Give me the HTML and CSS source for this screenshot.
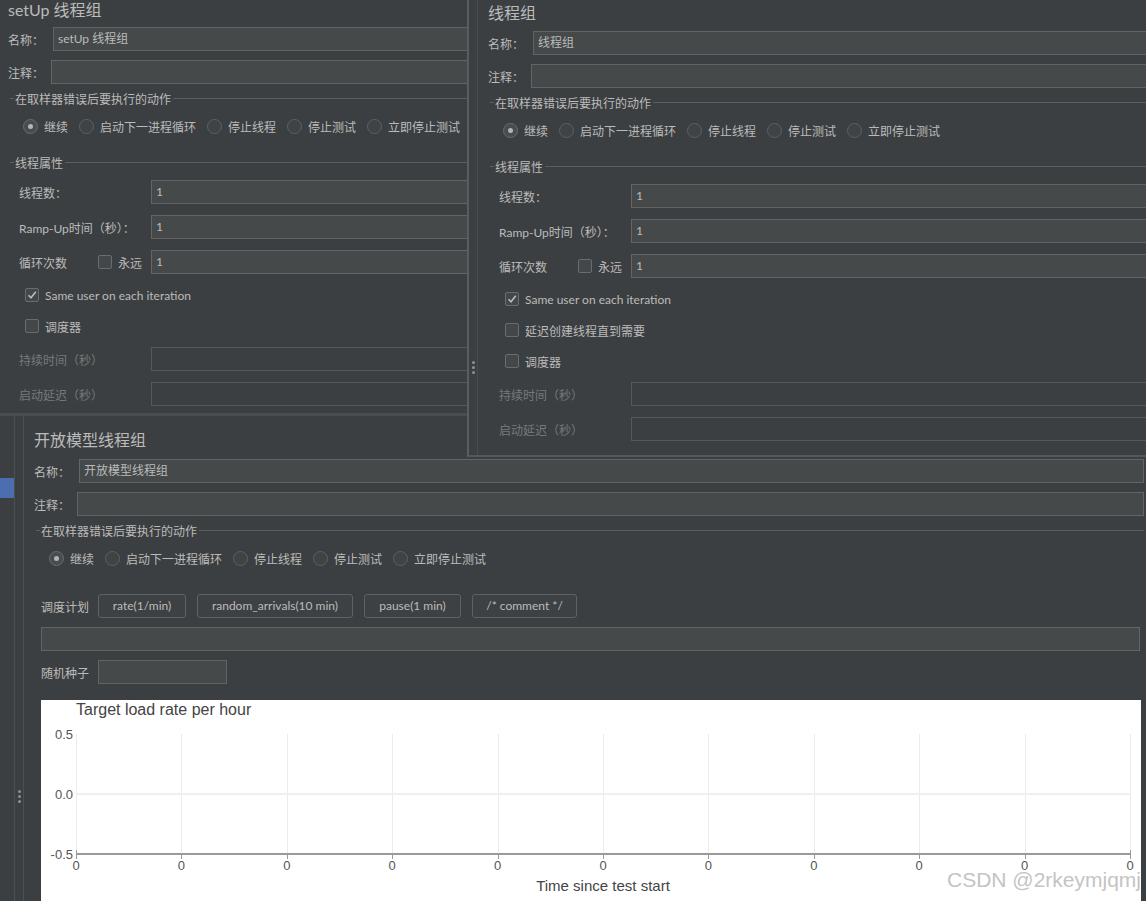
FILE: index.html
```html
<!DOCTYPE html>
<html lang="zh-CN">
<head>
<meta charset="utf-8">
<title>JMeter 线程组</title>
<link rel="stylesheet" href="styles.css">
</head>
<body>
<div class="desk">

  <!-- 开放模型线程组 -->
  <section class="win win-c">
    <div class="side"><div class="sel"></div></div>
    <div class="split split-c"><i></i><i></i><i></i></div>
    <div class="pane pane-c">
      <h1 class="title">开放模型线程组</h1>
      <div class="frow"><span class="fl fl-name">名称：</span><div class="inp">开放模型线程组</div></div>
      <div class="frow frow-gap"><span class="fl fl-cmt">注释：</span><div class="inp"></div></div>
      <div class="legend"><span>在取样器错误后要执行的动作</span></div>
      <div class="radios">
        <span class="ritem"><span class="radio on"></span>继续</span>
        <span class="ritem"><span class="radio"></span>启动下一进程循环</span>
        <span class="ritem"><span class="radio"></span>停止线程</span>
        <span class="ritem"><span class="radio"></span>停止测试</span>
        <span class="ritem"><span class="radio"></span>立即停止测试</span>
      </div>
      <div class="sched">
        <span class="slabel">调度计划</span>
        <span class="btn btn-rate">rate(1/min)</span>
        <span class="btn btn-rand">random_arrivals(10 min)</span>
        <span class="btn btn-pause">pause(1 min)</span>
        <span class="btn btn-cmt">/* comment */</span>
      </div>
      <div class="inp area"></div>
      <div class="seed"><span class="slabel">随机种子</span><div class="inp seed-inp"></div></div>
      <div class="chart">
        <svg width="1100" height="205" viewBox="0 0 1100 205">
          <g stroke="#ececec" stroke-width="1">
            <line x1="35.5" y1="34" x2="35.5" y2="154"/>
            <line x1="140.5" y1="34" x2="140.5" y2="154"/>
            <line x1="246.5" y1="34" x2="246.5" y2="154"/>
            <line x1="351.5" y1="34" x2="351.5" y2="154"/>
            <line x1="457.5" y1="34" x2="457.5" y2="154"/>
            <line x1="562.5" y1="34" x2="562.5" y2="154"/>
            <line x1="667.5" y1="34" x2="667.5" y2="154"/>
            <line x1="773.5" y1="34" x2="773.5" y2="154"/>
            <line x1="878.5" y1="34" x2="878.5" y2="154"/>
            <line x1="984.5" y1="34" x2="984.5" y2="154"/>
            <line x1="1089.5" y1="34" x2="1089.5" y2="154"/>
          </g>
          <line x1="35" y1="94" x2="1090" y2="94" stroke="#f0f0f0" stroke-width="2"/>
          <line x1="35" y1="154" x2="1090" y2="154" stroke="#9a9a9a" stroke-width="2"/>
          <g stroke="#9a9a9a" stroke-width="1">
            <line x1="35.5" y1="150" x2="35.5" y2="159"/>
            <line x1="140.5" y1="154" x2="140.5" y2="159"/>
            <line x1="246.5" y1="154" x2="246.5" y2="159"/>
            <line x1="351.5" y1="154" x2="351.5" y2="159"/>
            <line x1="457.5" y1="154" x2="457.5" y2="159"/>
            <line x1="562.5" y1="154" x2="562.5" y2="159"/>
            <line x1="667.5" y1="154" x2="667.5" y2="159"/>
            <line x1="773.5" y1="154" x2="773.5" y2="159"/>
            <line x1="878.5" y1="154" x2="878.5" y2="159"/>
            <line x1="984.5" y1="154" x2="984.5" y2="159"/>
            <line x1="1089.5" y1="150" x2="1089.5" y2="159"/>
          </g>
          <text class="ctitle" x="35" y="15">Target load rate per hour</text>
          <g class="ytick" text-anchor="end">
            <text x="32" y="39">0.5</text>
            <text x="32" y="99">0.0</text>
            <text x="32" y="159">-0.5</text>
          </g>
          <g class="xtick" text-anchor="middle">
            <text x="35" y="170">0</text>
            <text x="140.4" y="170">0</text>
            <text x="245.8" y="170">0</text>
            <text x="351.2" y="170">0</text>
            <text x="456.6" y="170">0</text>
            <text x="562" y="170">0</text>
            <text x="667.4" y="170">0</text>
            <text x="772.8" y="170">0</text>
            <text x="878.2" y="170">0</text>
            <text x="983.6" y="170">0</text>
            <text x="1089" y="170">0</text>
          </g>
          <text class="xtitle" x="562" y="191" text-anchor="middle">Time since test start</text>
          <text class="mark" x="1100" y="187" text-anchor="end">CSDN @2rkeymjqmj</text>
        </svg>
      </div>
    </div>
  </section>

  <!-- setUp 线程组 -->
  <section class="win win-a">
    <div class="pane pane-a">
      <h1 class="title">setUp 线程组</h1>
      <div class="frow"><span class="fl fl-name">名称：</span><div class="inp">setUp 线程组</div></div>
      <div class="frow frow-gap"><span class="fl fl-cmt">注释：</span><div class="inp"></div></div>
      <div class="legend"><span>在取样器错误后要执行的动作</span></div>
      <div class="radios">
        <span class="ritem"><span class="radio on"></span>继续</span>
        <span class="ritem"><span class="radio"></span>启动下一进程循环</span>
        <span class="ritem"><span class="radio"></span>停止线程</span>
        <span class="ritem"><span class="radio"></span>停止测试</span>
        <span class="ritem"><span class="radio"></span>立即停止测试</span>
      </div>
      <div class="legend legend-2"><span>线程属性</span></div>
      <div class="props">
        <div class="prow"><span class="pl">线程数：</span><div class="inp">1</div></div>
        <div class="prow"><span class="pl">Ramp-Up时间（秒）：</span><div class="inp">1</div></div>
        <div class="prow"><span class="pl pl-loop"><span class="loopname">循环次数</span><span class="chk"></span>永远</span><div class="inp">1</div></div>
      </div>
      <div class="crow crow-first"><span class="chk on"><svg width="12" height="12" viewBox="0 0 12 12"><path d="M2.5 6.2 L5 8.8 L9.8 2.8" fill="none" stroke="#bbbbbb" stroke-width="1.6"/></svg></span>Same user on each iteration</div>
      <div class="crow"><span class="chk"></span>调度器</div>
      <div class="props props-dis">
        <div class="prow"><span class="pl dis">持续时间（秒）</span><div class="inp inp-dis"></div></div>
        <div class="prow"><span class="pl dis">启动延迟（秒）</span><div class="inp inp-dis"></div></div>
      </div>
    </div>
  </section>

  <!-- 线程组 -->
  <section class="win win-b">
    <div class="split split-b"><i></i><i></i><i></i></div>
    <div class="pane pane-b">
      <h1 class="title">线程组</h1>
      <div class="frow"><span class="fl fl-name">名称：</span><div class="inp">线程组</div></div>
      <div class="frow frow-gap"><span class="fl fl-cmt">注释：</span><div class="inp"></div></div>
      <div class="legend"><span>在取样器错误后要执行的动作</span></div>
      <div class="radios">
        <span class="ritem"><span class="radio on"></span>继续</span>
        <span class="ritem"><span class="radio"></span>启动下一进程循环</span>
        <span class="ritem"><span class="radio"></span>停止线程</span>
        <span class="ritem"><span class="radio"></span>停止测试</span>
        <span class="ritem"><span class="radio"></span>立即停止测试</span>
      </div>
      <div class="legend legend-2"><span>线程属性</span></div>
      <div class="props">
        <div class="prow"><span class="pl">线程数：</span><div class="inp">1</div></div>
        <div class="prow"><span class="pl">Ramp-Up时间（秒）：</span><div class="inp">1</div></div>
        <div class="prow"><span class="pl pl-loop"><span class="loopname">循环次数</span><span class="chk"></span>永远</span><div class="inp">1</div></div>
      </div>
      <div class="crow crow-first"><span class="chk on"><svg width="12" height="12" viewBox="0 0 12 12"><path d="M2.5 6.2 L5 8.8 L9.8 2.8" fill="none" stroke="#bbbbbb" stroke-width="1.6"/></svg></span>Same user on each iteration</div>
      <div class="crow"><span class="chk"></span>延迟创建线程直到需要</div>
      <div class="crow"><span class="chk"></span>调度器</div>
      <div class="props props-dis">
        <div class="prow"><span class="pl dis">持续时间（秒）</span><div class="inp inp-dis"></div></div>
        <div class="prow"><span class="pl dis">启动延迟（秒）</span><div class="inp inp-dis"></div></div>
      </div>
    </div>
  </section>

</div>
</body>
</html>
```

FILE: styles.css
```css
* { box-sizing: border-box; }

body {
  margin: 0;
  background: #3c3f41;
  color: #bbbbbb;
  font-family: Lato, "Noto Sans CJK SC", "Noto Sans", sans-serif;
  font-size: 12px;
  overflow: hidden;
}

.desk {
  position: relative;
  width: 1146px;
  height: 901px;
  overflow: hidden;
}

/* windows of the collage */
.win {
  position: absolute;
  background: #3c3f41;
  overflow: hidden;
}
.win-a {
  left: 0;
  top: 0;
  width: 467px;
  height: 416px;
  border-bottom: 3px solid #4a4d4f;
}
.win-b {
  left: 467px;
  top: 0;
  width: 679px;
  height: 457px;
  border-left: 2px solid #5a5d5f;
  border-bottom: 2px solid #55585a;
  display: flex;
}
.win-c {
  left: 0;
  top: 416px;
  width: 1146px;
  height: 485px;
  display: flex;
}

/* split-pane handles */
.split {
  flex: none;
  display: flex;
  flex-direction: column;
  align-items: center;
  gap: 2px;
}
.split i {
  display: block;
  width: 3px;
  height: 3px;
  border-radius: 50%;
  background: #8e9193;
}
.split-b {
  width: 9px;
  border-right: 1px solid #4a4d4f;
  padding-top: 361px;
}
.split-c {
  width: 9px;
  border-right: 1px solid #4d5052;
  padding-top: 374px;
}
.side {
  flex: none;
  width: 15px;
  border-right: 1px solid #4d5052;
  padding-top: 62px;
}
.sel {
  width: 14px;
  height: 20px;
  background: #4b6eaf;
}

/* panel content */
.pane {
  flex: none;
  display: flex;
  flex-direction: column;
}
.pane-a { width: 540px; padding-left: 8px; }
.pane-b { width: 720px; padding: 4px 0 0 10px; }
.pane-c { width: 1122px; padding: 16px 2px 0 10px; }

.title {
  margin: 0;
  font-size: 16px;
  font-weight: normal;
  line-height: 20px;
  height: 20px;
  color: #bbbbbb;
  white-space: nowrap;
}
.pane-b .title { margin-top: -1px; }
.pane-c .title { margin-top: -2px; }

.frow {
  display: flex;
  align-items: center;
  margin-top: 7px;
}
.pane-b .frow { margin-top: 8px; }
.pane-c .frow { margin-top: 9px; }
.pane .frow.frow-gap { margin-top: 9px; }
.fl { flex: none; }
.fl-name { width: 45px; }
.fl-cmt { width: 43px; }

.inp {
  flex: 1;
  height: 24px;
  border: 1px solid #646464;
  background: #45494a;
  padding-left: 4px;
  line-height: 22px;
  color: #bbbbbb;
  white-space: nowrap;
}
.inp-dis {
  background: #3c3f41;
  border-color: #56595b;
}

/* titled border */
.legend {
  display: flex;
  align-items: center;
  height: 16px;
  margin-top: 6px;
  padding-left: 2px;
}
.legend::before {
  content: "";
  width: 4px;
  height: 1px;
  background: #5c5f61;
  margin-right: 1px;
}
.legend::after {
  content: "";
  flex: 1;
  height: 1px;
  background: #5c5f61;
  margin-left: 2px;
}
.legend span { white-space: nowrap; }
.legend-2 { margin-top: 20px; }

/* radios */
.radios {
  display: flex;
  align-items: center;
  gap: 11px;
  height: 16px;
  margin-top: 12px;
  padding-left: 15px;
}
.ritem {
  display: flex;
  align-items: center;
  gap: 6px;
  white-space: nowrap;
}
.radio {
  position: relative;
  flex: none;
  width: 15px;
  height: 15px;
  border-radius: 50%;
  border: 1px solid #5e6163;
  background: #3f4345;
}
.radio.on { background: #484c4e; border-color: #6a6d6f; }
.radio.on::after {
  content: "";
  position: absolute;
  left: 4px;
  top: 4px;
  width: 5px;
  height: 5px;
  border-radius: 50%;
  background: #b4b4b4;
}

/* property rows */
.props {
  display: flex;
  flex-direction: column;
  gap: 11px;
  margin-top: 10px;
  padding-left: 11px;
}
.props-dis { margin-top: 13px; }
.prow {
  display: flex;
  align-items: center;
}
.pl {
  flex: none;
  width: 132px;
  white-space: nowrap;
}
.pl.dis { color: #76797b; }
.pl-loop {
  display: flex;
  align-items: center;
}
.loopname { width: 79px; }
.pl-loop .chk { margin-right: 6px; }

/* checkbox rows */
.crow {
  display: flex;
  align-items: center;
  gap: 6px;
  height: 16px;
  margin-top: 15px;
  padding-left: 17px;
  white-space: nowrap;
}
.crow.crow-first { margin-top: 13px; }
.chk {
  flex: none;
  display: flex;
  align-items: center;
  justify-content: center;
  width: 14px;
  height: 14px;
  border: 1px solid #6a6d6f;
  border-radius: 2px;
  background: #43474a;
}

/* open model extras */
.sched {
  display: flex;
  align-items: center;
  gap: 11px;
  margin-top: 28px;
  padding-left: 7px;
  height: 24px;
}
.slabel {
  flex: none;
  margin-right: -2px;
  white-space: nowrap;
}
.btn {
  flex: none;
  height: 24px;
  line-height: 22px;
  text-align: center;
  border: 1px solid #5f6264;
  border-radius: 3px;
  background: #3e4143;
  white-space: nowrap;
}
.btn-rate { width: 88px; }
.btn-rand { width: 156px; }
.btn-pause { width: 97px; }
.btn-cmt { width: 105px; }

.area {
  flex: none;
  margin: 9px 4px 0 7px;
}
.seed {
  display: flex;
  align-items: center;
  gap: 9px;
  margin-top: 9px;
  padding-left: 7px;
}
.seed .slabel { margin-right: 0; }
.seed-inp { flex: none; width: 129px; }

.chart {
  margin: 16px 3px 0 7px;
  height: 205px;
  background: #ffffff;
  overflow: hidden;
}
.chart svg { display: block; }
.ctitle { font-family: "Liberation Sans", Arial, sans-serif; font-size: 16px; fill: #444444; }
.ytick, .xtick { font-family: "Liberation Sans", Arial, sans-serif; font-size: 13px; fill: #555555; }
.xtitle { font-family: "Liberation Sans", Arial, sans-serif; font-size: 15px; fill: #444444; }
.mark { font-family: "Liberation Sans", Arial, sans-serif; font-size: 21px; fill: #c4c4c4; }
```
